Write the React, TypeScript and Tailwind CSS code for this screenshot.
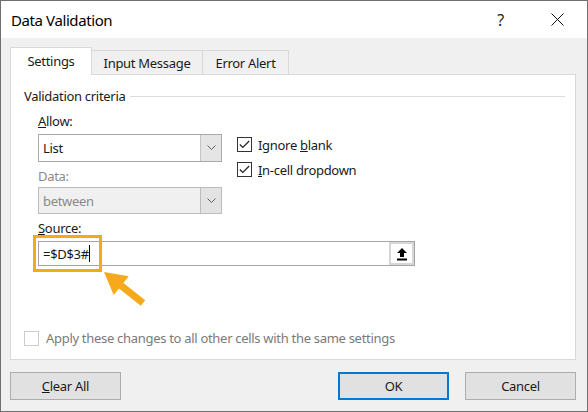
import React from "react";

function Chevron({ color = "#5f5f5f" }: { color?: string }) {
  return (
    <svg width="9" height="6" viewBox="0 0 9 6">
      <polyline points="0.5,0.5 4.5,4.5 8.5,0.5" fill="none" stroke={color} strokeWidth="1" />
    </svg>
  );
}

function Check({ checked, disabled }: { checked?: boolean; disabled?: boolean }) {
  return (
    <div
      className={`w-[15px] h-[15px] border flex items-center justify-center bg-white shrink-0 ${
        disabled ? "border-[#cccccc]" : "border-[#333333]"
      }`}
    >
      {checked && (
        <svg width="11" height="9" viewBox="0 0 11 9">
          <polyline points="0.8,4.5 3.8,7.5 10.2,1" fill="none" stroke="#222" strokeWidth="1.2" />
        </svg>
      )}
    </div>
  );
}

function Combo({ value, disabled }: { value: string; disabled?: boolean }) {
  return (
    <div
      className={`flex w-[184px] border ${
        disabled ? "h-[27px] border-[#bcbcbc] bg-[#f0f0f0] text-[#8a8a8a]" : "h-[28px] border-[#a9a9a9] bg-white"
      }`}
    >
      <div className="flex-1 flex items-center pl-[4px]">{value}</div>
      <div
        className={`w-[21px] flex items-center justify-center border-l ${
          disabled ? "border-[#bcbcbc] bg-[#e3e3e3]" : "border-[#c4c4c4] bg-[#e5e5e5]"
        }`}
      >
        <Chevron />
      </div>
    </div>
  );
}

function Button({ children, primary }: { children: React.ReactNode; primary?: boolean }) {
  return (
    <div
      className={`w-[111px] h-[28px] flex items-center justify-center bg-[#e1e1e1] ${
        primary ? "border-2 border-[#0078d7]" : "border border-[#adadad]"
      }`}
    >
      {children}
    </div>
  );
}

export default function App() {
  return (
    <div className="relative w-[588px] h-[412px] border border-[#6f6f6f] bg-[#f0f0f0] flex flex-col overflow-hidden font-['Noto_Sans','Liberation_Sans',sans-serif] text-[13px] leading-[18px] tracking-[-0.3px] text-[#1a1a1a]">
      {/* title bar */}
      <div className="h-[37px] shrink-0 bg-white flex items-center pl-[10px]">
        <span className="text-[15px] tracking-[-0.4px] text-black">Data Validation</span>
        <span className="ml-auto text-[16px] text-[#222]">?</span>
        <svg className="ml-[47px] mr-[23px]" width="13" height="13" viewBox="0 0 13 13">
          <path d="M0.5 0.5 L12.5 12.5 M12.5 0.5 L0.5 12.5" stroke="#111" strokeWidth="1" />
        </svg>
      </div>

      <div className="flex-1 pt-[9px] pl-[9px]">
        {/* tabs */}
        <div className="relative z-10 flex items-end h-[27px]">
          <div className="w-[82px] h-[28px] -mb-px bg-white border border-b-0 border-[#d9d9d9] flex items-center justify-center pb-[2px]">
            Settings
          </div>
          <div className="w-[112px] h-[24px] -ml-px border border-b-0 border-[#d9d9d9] flex items-center justify-center">
            Input Message
          </div>
          <div className="w-[87px] h-[24px] -ml-px border border-b-0 border-[#d9d9d9] flex items-center justify-center">
            Error Alert
          </div>
        </div>

        {/* settings panel */}
        <div className="w-[566px] h-[286px] bg-white border border-[#d9d9d9] pt-[12px] pl-[13px]">
          <div className="flex items-center h-[18px]">
            <span>Validation criteria</span>
            <div className="flex-1 h-px bg-[#dcdcdc] ml-[5px] mr-[10px]" />
          </div>

          <div className="ml-[14px]">
            <div className="flex">
              <div className="w-[184px]">
                <div className="mt-[7px]">
                  <u>A</u>llow:
                </div>
                <div className="mt-[4px]">
                  <Combo value="List" />
                </div>
                <div className="mt-[5px] text-[#8a8a8a]">Data:</div>
                <div className="mt-[2px]">
                  <Combo value="between" disabled />
                </div>
              </div>
              <div className="ml-[15px] mt-[32px] flex flex-col gap-[10px]">
                <div className="flex items-center h-[15px] gap-[6px]">
                  <Check checked />
                  <span>
                    Ignore <u>b</u>lank
                  </span>
                </div>
                <div className="flex items-center h-[15px] gap-[6px]">
                  <Check checked />
                  <span>
                    <u>I</u>n-cell dropdown
                  </span>
                </div>
              </div>
            </div>

            <div className="mt-[5px]">
              <u>S</u>ource:
            </div>
            <div className="mt-[4px] w-[377px] h-[25px] border border-[#a5a5a5] flex">
              <div className="flex-1 flex items-center pl-[4px]">
                <span>=$D$3#</span>
                <span className="w-px h-[17px] bg-black" />
              </div>
              <div className="w-[25px] h-full border-2 border-[#d6d6d6] bg-white flex items-center justify-center">
                <svg width="12" height="14" viewBox="0 0 12 14">
                  <polygon points="6,1 11,6 8,6 8,10 4,10 4,6 1,6" fill="#000" />
                  <rect x="1" y="11.5" width="10" height="2" fill="#000" />
                </svg>
              </div>
            </div>
          </div>

          <div className="mt-[63px] flex items-center gap-[7px] text-[#7a7a7a]">
            <Check disabled />
            <span>Apply these changes to all other cells with the same settings</span>
          </div>
        </div>

        {/* dialog buttons */}
        <div className="mt-[12px] w-[566px] flex">
          <Button>
            <span>
              <u>C</u>lear All
            </span>
          </Button>
          <div className="ml-auto">
            <Button primary>OK</Button>
          </div>
          <div className="ml-[16px]">
            <Button>Cancel</Button>
          </div>
        </div>
      </div>

      {/* callout on the source field */}
      <div className="absolute left-[32px] top-[234px] w-[69px] h-[37px] border-[3px] border-[#f6a91a] pointer-events-none" />
      <svg
        className="absolute left-[-1px] top-[-1px] pointer-events-none"
        width="588"
        height="412"
        viewBox="0 0 588 412"
      >
        <polygon
          points="104,272 128.7,276.3 123.4,282.9 145.2,300.3 140.8,305.7 119,288.4 113.7,295.1"
          fill="#f6a91a"
        />
      </svg>
    </div>
  );
}
